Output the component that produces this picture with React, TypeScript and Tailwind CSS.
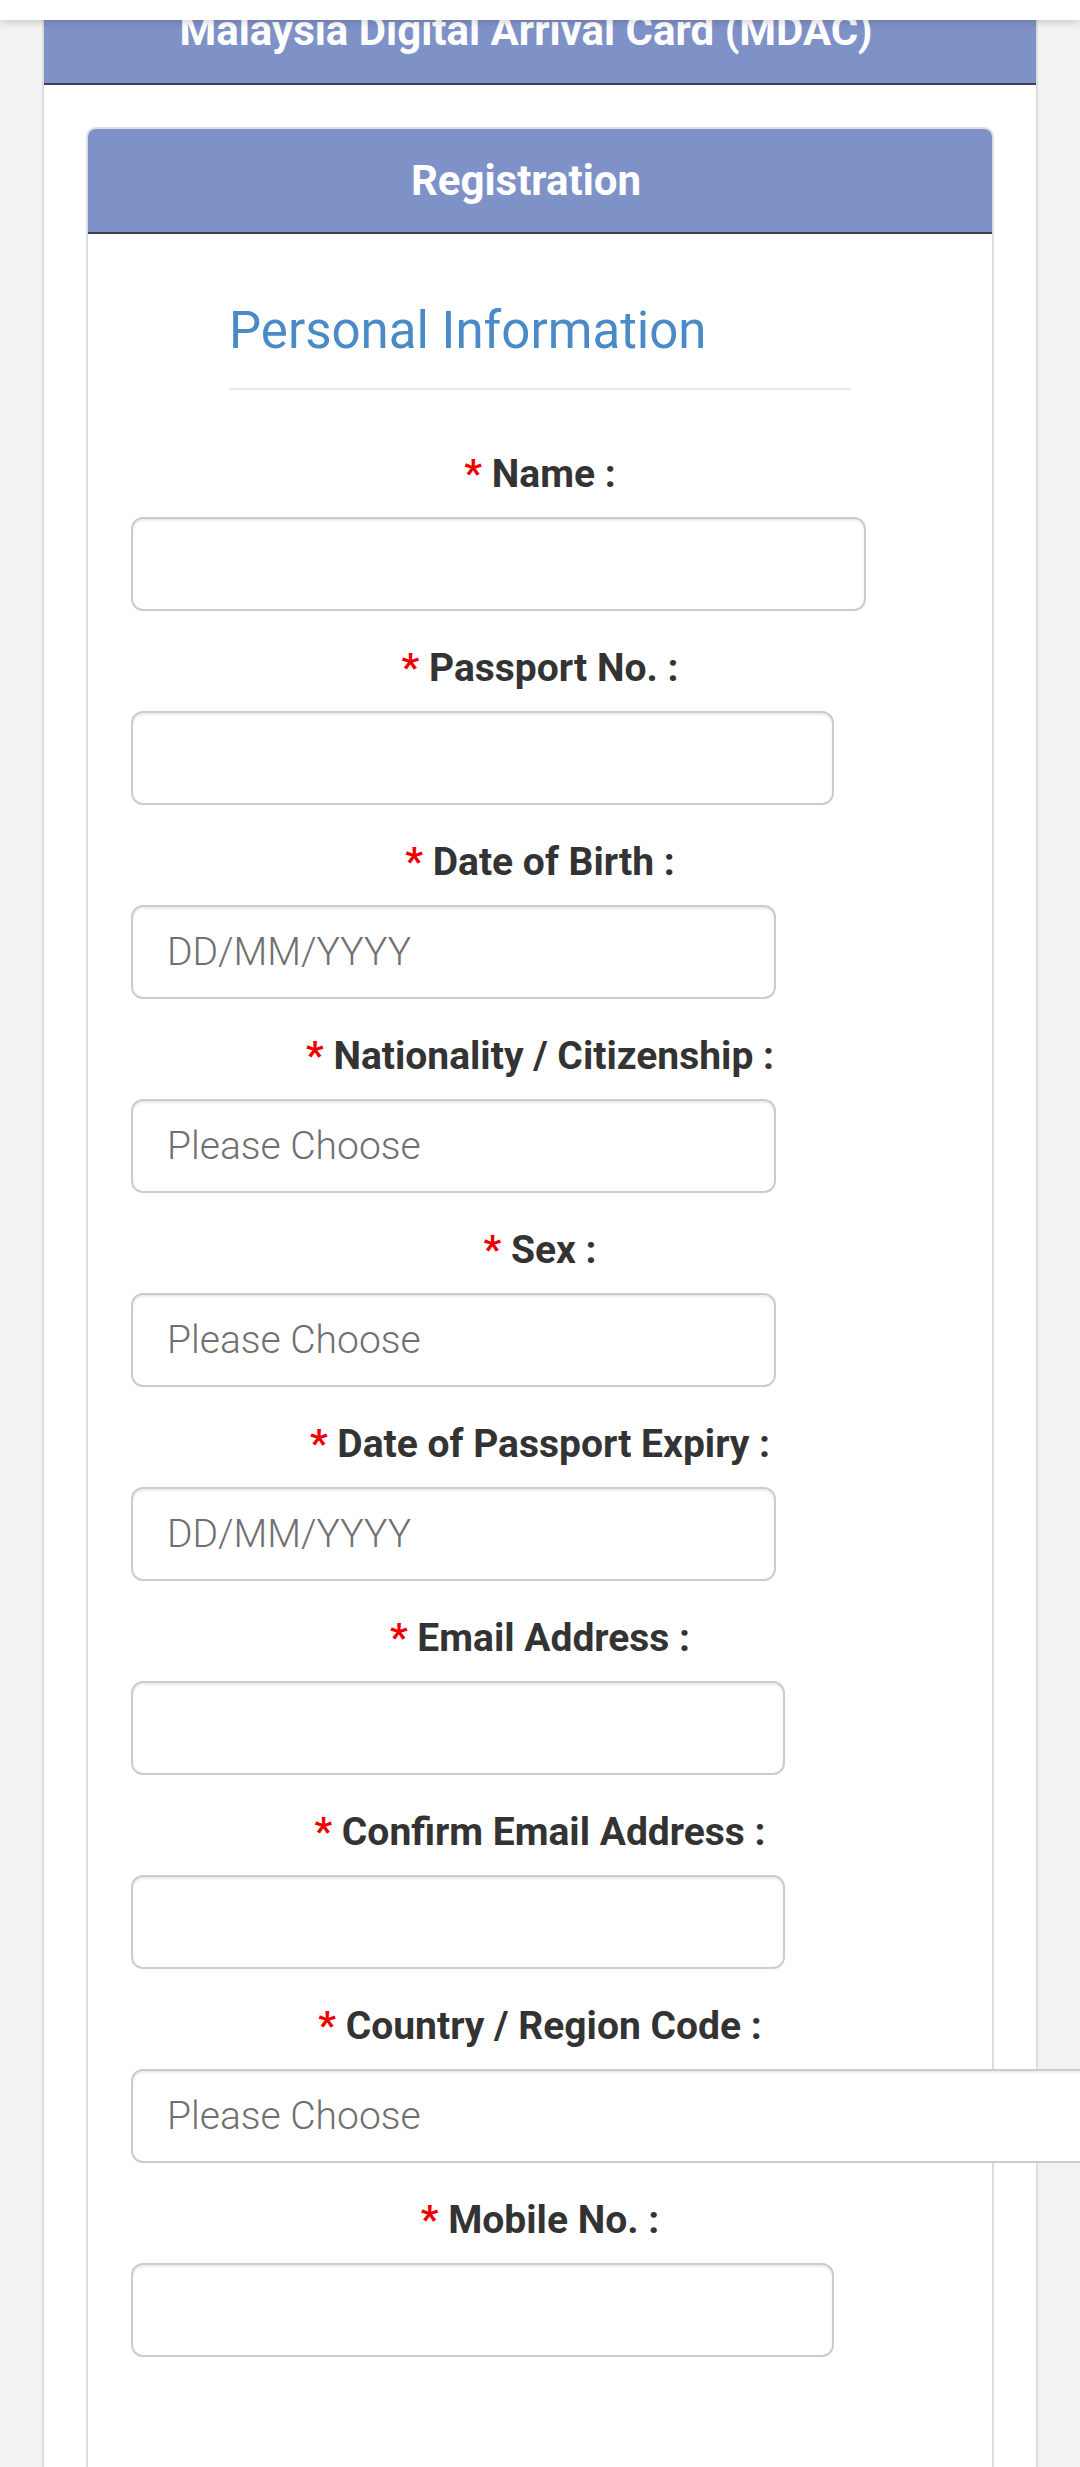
import React from "react";

type Field = {
	label: string;
	width: string;
	placeholder?: string;
};

const fields: Field[] = [
	{ label: "Name :", width: "w-[735px]" },
	{ label: "Passport No. :", width: "w-[703px]" },
	{ label: "Date of Birth :", width: "w-[645px]", placeholder: "DD/MM/YYYY" },
	{ label: "Nationality / Citizenship :", width: "w-[645px]", placeholder: "Please Choose" },
	{ label: "Sex :", width: "w-[645px]", placeholder: "Please Choose" },
	{ label: "Date of Passport Expiry :", width: "w-[645px]", placeholder: "DD/MM/YYYY" },
	{ label: "Email Address :", width: "w-[654px]" },
	{ label: "Confirm Email Address :", width: "w-[654px]" },
	{ label: "Country / Region Code :", width: "w-[1100px]", placeholder: "Please Choose" },
	{ label: "Mobile No. :", width: "w-[703px]" },
];

function FormField({ field }: { field: Field }) {
	return (
		<div className="flex flex-col">
			<label className="block text-center text-[39px] leading-[45px] font-bold text-[#333]">
				<span className="text-[#e00]">*</span> {field.label}
			</label>
			<input
				type="text"
				readOnly
				placeholder={field.placeholder}
				className={`${field.width} mt-[20px] ml-[43px] h-[94px] shrink-0 rounded-[12px] border-2 border-[#ccc] bg-white pl-[34px] text-[39px] text-[#555] shadow-[inset_0_2px_2px_rgba(0,0,0,0.075)] outline-none placeholder:font-light placeholder:text-[#707070]`}
			/>
		</div>
	);
}

export default function App() {
	return (
		<div className="relative min-h-[2467px] overflow-hidden bg-[#f2f2f2] font-['Roboto','Liberation_Sans',sans-serif]">
			{/* top bar over the page */}
			<div className="absolute left-0 right-0 top-0 z-10 h-[20px] bg-white shadow-[0_2px_8px_rgba(0,0,0,0.18)]" />

			<div className="ml-[42px] w-[996px] min-h-[2467px] border-x-2 border-[#ddd] bg-white">
				<div className="h-[85px] border-b-2 border-[#3b3f4e] bg-[#7f92c8] pt-[6px] pr-[28px] text-center">
					<h1 className="text-[42px] leading-[50px] font-bold text-white">
						Malaysia Digital Arrival Card (MDAC)
					</h1>
				</div>

				<div className="mx-[42px] mt-[42px] min-h-[2400px] rounded-t-[10px] border-2 border-b-0 border-[#ddd]">
					<div className="flex h-[105px] items-center justify-center rounded-t-[8px] border-b-2 border-[#3b3f4e] bg-[#7f92c8] pr-[28px]">
						<h2 className="text-[42px] font-bold text-white">Registration</h2>
					</div>

					<div className="mx-auto w-[622px] pt-[69px]">
						<h3 className="text-[51px] leading-[55px] text-[#4a8ac6]">Personal Information</h3>
						<div className="mt-[30px] border-t-2 border-[#e8e8e8]" />
					</div>

					<div className="mt-[62px] flex flex-col gap-[35px]">
						{fields.map(f => (
							<FormField key={f.label} field={f} />
						))}
					</div>
				</div>
			</div>
		</div>
	);
}
